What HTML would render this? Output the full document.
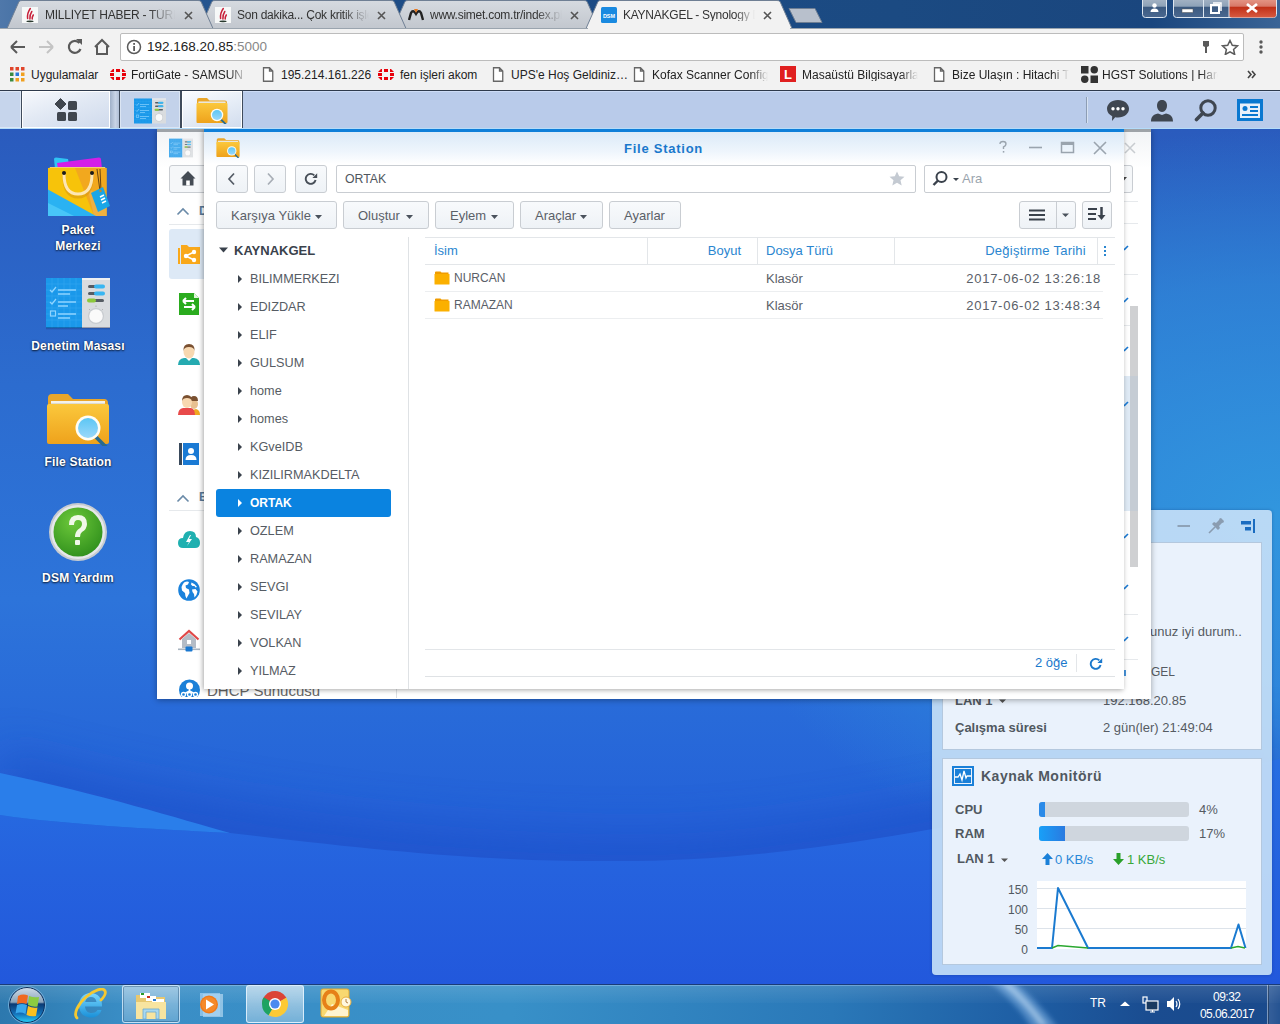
<!DOCTYPE html>
<html><head><meta charset="utf-8">
<style>
*{margin:0;padding:0;box-sizing:border-box}
html,body{width:1280px;height:1024px;overflow:hidden;font-family:"Liberation Sans",sans-serif;position:relative;background:#2a6ad0}
.a{position:absolute}
.t{position:absolute;white-space:nowrap;line-height:1}
#frame{left:0;top:0;width:1280px;height:29px;background:linear-gradient(90deg,#4f78aa 0%,#2a5a94 8%,#1d4c86 30%,#1b4a82 70%,#1a467e 90%,#3a6496 100%)}
#toolbar{left:0;top:28px;width:1280px;height:34px;background:#f2f2f2;border-top:1px solid #9aa4ae}
#bm{left:0;top:62px;width:1280px;height:28px;background:#f2f2f2}
#dsmbar{left:0;top:89px;width:1280px;height:40px;background:#bccfea;border-top:1px solid #4d5c70}
#wtb{left:0;top:980px;width:1280px;height:44px;background:linear-gradient(180deg,#3a86c6 0%,#2a70b0 50%,#2664a4 100%);border-top:1px solid #1a3a70}
.tabtxt{font-size:12px;color:#333;letter-spacing:-0.25px}
.bmt{font-size:12px;color:#222}
.dl{font-size:12px;font-weight:bold;letter-spacing:0.2px;color:#fff;text-shadow:0 1px 2px rgba(0,0,0,0.7),0 0 2px rgba(0,0,0,0.4)}
.btn{background:linear-gradient(180deg,#f8fafc,#eef2f6);border:1px solid #c9cdd2;border-radius:3px}
.bt{font-size:13px;color:#5a6068}
.ti{position:absolute;left:238px;white-space:nowrap;font-size:12.7px;color:#565c64;line-height:13px;padding-left:12px}
.ti i{position:absolute;left:0;top:1.5px;width:0;height:0;border-top:4px solid transparent;border-bottom:4px solid transparent;border-left:4px solid #3a424c}
.ti.sel{color:#fff;font-weight:bold;font-size:12px}
.ti{margin-top:1px}
.ti.sel i{border-left-color:#fff}
.hd{font-size:13px;color:#2a86d0}
.rw{font-size:13px;color:#5a6068}
.dt{letter-spacing:0.74px}
.wt{font-size:13px;color:#555b62}
.wb{font-size:13px;color:#505860;font-weight:bold}
.ax{font-size:12px;color:#505860}
</style></head><body>
<!-- desktop -->
<svg class="a" style="left:0;top:129px" width="1280" height="855" viewBox="0 0 1280 855">
<defs>
<linearGradient id="dg" x1="0" y1="0" x2="0" y2="1">
<stop offset="0" stop-color="#2a5bbd"/><stop offset="0.3" stop-color="#2c6ccf"/><stop offset="0.55" stop-color="#2d74da"/><stop offset="0.8" stop-color="#2462d8"/><stop offset="1" stop-color="#2258da"/>
</linearGradient>
<radialGradient id="dr" cx="1" cy="0.45" r="0.45">
<stop offset="0" stop-color="#3196de" stop-opacity="1"/><stop offset="0.6" stop-color="#3090dc" stop-opacity="0.6"/><stop offset="1" stop-color="#3090dc" stop-opacity="0"/>
</radialGradient>
<linearGradient id="lg" x1="0" y1="0" x2="0" y2="1"><stop offset="0" stop-color="#276ee2"/><stop offset="0.5" stop-color="#2562de"/><stop offset="1" stop-color="#2258dc"/></linearGradient>
</defs>
<rect width="1280" height="855" fill="url(#dg)"/>
<rect width="1280" height="855" fill="url(#dr)"/>
<defs><linearGradient id="dz" x1="0" y1="0" x2="0" y2="1"><stop offset="0" stop-color="#1e50c8" stop-opacity="0"/><stop offset="0.6" stop-color="#1e50c8" stop-opacity="0.35"/><stop offset="1" stop-color="#1e4ec8" stop-opacity="0.55"/></linearGradient></defs>
<filter id="bl" x="-0.2" y="-0.5" width="1.4" height="2"><feGaussianBlur stdDeviation="22"/></filter>
<path d="M0,620 C150,660 350,700 600,705 C760,710 900,680 1280,600 L1280,680 C900,760 760,780 600,780 C480,780 380,770 230,750 C180,740 100,720 0,700Z" fill="#1c4cc4" opacity="0.5" filter="url(#bl)"/>
<path d="M230,704 C380,722 480,732 600,732 C760,734 900,712 1280,630 L1280,855 L0,855 L0,686 C60,695 150,700 230,704Z" fill="url(#lg)"/>
<path d="M0,644 C100,665 180,690 230,704 C150,700 60,695 0,686Z" fill="#2a7eea"/>
</svg>
<div id="frame" class="a"></div>
<!-- tabs -->
<svg class="a" style="left:0;top:0" width="830" height="29">
<defs><linearGradient id="tg" x1="0" y1="0" x2="0" y2="1"><stop offset="0" stop-color="#d6dae0"/><stop offset="1" stop-color="#c2c7ce"/></linearGradient></defs>
<path d="M393,28.5 L405,1.5 Q406,0.5 408,0.5 L584,0.5 Q586,0.5 587,1.5 L599,28.5Z" fill="url(#tg)" stroke="#6f7f94" stroke-width="1"/>
<path d="M200,28.5 L212,1.5 Q213,0.5 215,0.5 L391,0.5 Q393,0.5 394,1.5 L406,28.5Z" fill="url(#tg)" stroke="#6f7f94" stroke-width="1"/>
<path d="M7,28.5 L19,1.5 Q20,0.5 22,0.5 L198,0.5 Q200,0.5 201,1.5 L213,28.5Z" fill="url(#tg)" stroke="#6f7f94" stroke-width="1"/>
<path d="M586,28.5 L598,1.5 Q599,0.5 601,0.5 L777,0.5 Q779,0.5 780,1.5 L792,28.5Z" fill="#f2f2f2" stroke="#6f7f94" stroke-width="1"/>
<path d="M789,8.5 L815,8.5 L822,22.5 L796,22.5Z" fill="#b8c0cc" stroke="#6f7f94" stroke-width="1"/>
</svg>
<!-- tab content -->
<svg class="a" style="left:22px;top:7px" width="16" height="16" viewBox="0 0 16 16"><rect width="16" height="16" fill="#f6f8f8"/><path d="M8.3,1.5 Q5,6 5.6,11.5 M9.8,4.5 Q7.5,8 7.9,12 M11.3,8 Q10,10 10.2,12" stroke="#c8203a" stroke-width="1.5" fill="none" stroke-linecap="round"/><ellipse cx="8" cy="14.3" rx="3.6" ry="0.9" fill="#2a3a30"/></svg>
<div class="t tabtxt" style="left:45px;top:9px;width:130px;overflow:hidden;-webkit-mask-image:linear-gradient(90deg,#000 80%,transparent)">MİLLİYET HABER - TÜRKİYE</div>
<svg class="a" style="left:184px;top:11px" width="9" height="9"><path d="M1,1L8,8M8,1L1,8" stroke="#555" stroke-width="1.6"/></svg>
<svg class="a" style="left:215px;top:7px" width="16" height="16" viewBox="0 0 16 16"><rect width="16" height="16" fill="#f6f8f8"/><path d="M8.3,1.5 Q5,6 5.6,11.5 M9.8,4.5 Q7.5,8 7.9,12 M11.3,8 Q10,10 10.2,12" stroke="#c8203a" stroke-width="1.5" fill="none" stroke-linecap="round"/><ellipse cx="8" cy="14.3" rx="3.6" ry="0.9" fill="#2a3a30"/></svg>
<div class="t tabtxt" style="left:237px;top:9px;width:132px;overflow:hidden;-webkit-mask-image:linear-gradient(90deg,#000 80%,transparent)">Son dakika... Çok kritik işlem</div>
<svg class="a" style="left:377px;top:11px" width="9" height="9"><path d="M1,1L8,8M8,1L1,8" stroke="#555" stroke-width="1.6"/></svg>
<svg class="a" style="left:408px;top:7px" width="16" height="16" viewBox="0 0 16 16"><path d="M1,13 L3,6 Q5,2 8,7 Q11,2 13,6 L15,13" stroke="#222" stroke-width="2.4" fill="none"/><path d="M6,2 L10,2 L8,6Z" fill="#e87820"/></svg>
<div class="t tabtxt" style="left:430px;top:9px;width:132px;overflow:hidden;-webkit-mask-image:linear-gradient(90deg,#000 80%,transparent)">www.simet.com.tr/index.php</div>
<svg class="a" style="left:570px;top:11px" width="9" height="9"><path d="M1,1L8,8M8,1L1,8" stroke="#555" stroke-width="1.6"/></svg>
<svg class="a" style="left:601px;top:7px" width="16" height="16" viewBox="0 0 16 16"><rect width="16" height="16" rx="1.5" fill="#1a8ae0"/><text x="8" y="10.5" font-size="5.5" font-family="Liberation Sans" font-weight="bold" fill="#fff" text-anchor="middle">DSM</text></svg>
<div class="t tabtxt" style="left:623px;top:9px;width:132px;overflow:hidden;-webkit-mask-image:linear-gradient(90deg,#000 85%,transparent)">KAYNAKGEL - Synology DiskStation</div>
<svg class="a" style="left:763px;top:11px" width="9" height="9"><path d="M1,1L8,8M8,1L1,8" stroke="#555" stroke-width="1.6"/></svg>
<!-- window controls -->
<svg class="a" style="left:1140px;top:0" width="140" height="20">
<defs>
<linearGradient id="wb" x1="0" y1="0" x2="0" y2="1"><stop offset="0" stop-color="#aab8c8"/><stop offset="0.45" stop-color="#8ea2b8"/><stop offset="0.5" stop-color="#3c5a80"/><stop offset="1" stop-color="#4a6890"/></linearGradient>
<linearGradient id="wc" x1="0" y1="0" x2="0" y2="1"><stop offset="0" stop-color="#e8a090"/><stop offset="0.45" stop-color="#d87868"/><stop offset="0.5" stop-color="#c03018"/><stop offset="1" stop-color="#d85a40"/></linearGradient>
</defs>
<rect x="2.5" y="-3" width="24" height="20.5" rx="3" fill="url(#wb)" stroke="#dde6f0" stroke-width="1"/>
<rect x="33.5" y="-3" width="103" height="20.5" rx="3" fill="url(#wb)" stroke="#dde6f0" stroke-width="1"/>
<rect x="89" y="-3" width="47" height="20.5" rx="3" fill="url(#wc)"/>
<line x1="63.5" y1="0" x2="63.5" y2="17" stroke="#dde6f0"/>
<line x1="89" y1="0" x2="89" y2="17" stroke="#dde6f0"/>
<circle cx="14.5" cy="5.5" r="2.2" fill="#fff"/><path d="M10.5,12 Q10.5,8.5 14.5,8.5 Q18.5,8.5 18.5,12Z" fill="#fff"/>
<rect x="42" y="9" width="11" height="3.5" fill="#fff" stroke="#555" stroke-width="0.5"/>
<rect x="71" y="5" width="8" height="8" fill="none" stroke="#fff" stroke-width="2"/><path d="M73,3 L81,3 L81,11" fill="none" stroke="#fff" stroke-width="1.5"/>
<path d="M107,4 L117,12 M117,4 L107,12" stroke="#fff" stroke-width="2.8"/>
</svg>
<div id="toolbar" class="a"></div>
<div class="a" style="left:588px;top:28px;width:202px;height:2px;background:#f2f2f2"></div>
<svg class="a" style="left:0;top:28px" width="120" height="34">
<path d="M11,19 L25,19 M11,19 L17,13 M11,19 L17,25" stroke="#5a5a5a" stroke-width="2" fill="none"/>
<path d="M53,19 L39,19 M53,19 L47,13 M53,19 L47,25" stroke="#c4c4c4" stroke-width="2" fill="none"/>
<path d="M79.5,15 A6,6 0 1 0 80.5,21" stroke="#5a5a5a" stroke-width="2.2" fill="none"/><path d="M76,11 L82,11 L82,17Z" fill="#5a5a5a"/>
<path d="M95,19 L102,12 L109,19 M97,18 L97,26 L107,26 L107,18" stroke="#5a5a5a" stroke-width="2" fill="none"/>
</svg>
<div class="a" style="left:120px;top:33px;width:1124px;height:28px;background:#fff;border:1px solid #bcbcbc;border-radius:2px"></div>
<svg class="a" style="left:126px;top:39px" width="16" height="16"><circle cx="8" cy="8" r="6.5" fill="none" stroke="#5a5a5a" stroke-width="1.5"/><rect x="7.2" y="7" width="1.8" height="5" fill="#5a5a5a"/><rect x="7.2" y="4" width="1.8" height="1.8" fill="#5a5a5a"/></svg>
<div class="t" style="left:147px;top:40px;font-size:13.5px;color:#222">192.168.20.85<span style="color:#888">:5000</span></div>
<svg class="a" style="left:1198px;top:39px" width="60" height="16">
<path d="M5,2 L11,2 L11,7 L9,8 L9,14 L7,14 L7,8 L5,7Z" fill="#5a5a5a"/>
<path d="M32,1.5 L34.3,6.3 L39.5,6.9 L35.6,10.4 L36.7,15.5 L32,12.9 L27.3,15.5 L28.4,10.4 L24.5,6.9 L29.7,6.3Z" fill="none" stroke="#5a5a5a" stroke-width="1.5"/>
</svg>
<svg class="a" style="left:1258px;top:39px" width="6" height="18"><circle cx="3" cy="3" r="1.7" fill="#5a5a5a"/><circle cx="3" cy="8" r="1.7" fill="#5a5a5a"/><circle cx="3" cy="13" r="1.7" fill="#5a5a5a"/></svg>
<div id="bm" class="a"></div>
<svg class="a" style="left:10px;top:67px" width="15" height="15">
<rect x="0" y="0" width="3.5" height="3.5" fill="#e0452b"/><rect x="5.5" y="0" width="3.5" height="3.5" fill="#e0452b"/><rect x="11" y="0" width="3.5" height="3.5" fill="#e0452b"/>
<rect x="0" y="5.5" width="3.5" height="3.5" fill="#3a8a40"/><rect x="5.5" y="5.5" width="3.5" height="3.5" fill="#2a78d8"/><rect x="11" y="5.5" width="3.5" height="3.5" fill="#f0a020"/>
<rect x="0" y="11" width="3.5" height="3.5" fill="#3a8a40"/><rect x="5.5" y="11" width="3.5" height="3.5" fill="#f0a020"/><rect x="11" y="11" width="3.5" height="3.5" fill="#f0a020"/>
</svg>
<div class="t bmt" style="left:31px;top:69px">Uygulamalar</div>
<svg class="a" style="left:110px;top:67px" width="16" height="15"><g fill="#e8000a"><path d="M0,5 L3,2 L4,2 L4,5Z"/><rect x="6" y="2" width="4" height="3"/><path d="M12,2 L13,2 L16,5 L12,5Z"/><rect x="0" y="6" width="4" height="3"/><rect x="12" y="6" width="4" height="3"/><path d="M0,10 L4,10 L4,13 L3,13Z"/><rect x="6" y="10" width="4" height="3"/><path d="M12,10 L16,10 L13,13 L12,13Z"/></g></svg>
<div class="t bmt" style="left:131px;top:69px;width:116px;overflow:hidden;-webkit-mask-image:linear-gradient(90deg,#000 85%,transparent)">FortiGate - SAMSUN_BIM</div>
<svg class="a" style="left:262px;top:67px" width="12" height="15"><path d="M1.5,0.75 L7.5,0.75 L10.75,4 L10.75,14.25 L1.5,14.25Z M7.5,0.75 L7.5,4 L10.75,4" fill="#fff" stroke="#666" stroke-width="1.3"/></svg>
<div class="t bmt" style="left:281px;top:69px">195.214.161.226</div>
<svg class="a" style="left:378px;top:67px" width="16" height="15"><g fill="#e8000a"><path d="M0,5 L3,2 L4,2 L4,5Z"/><rect x="6" y="2" width="4" height="3"/><path d="M12,2 L13,2 L16,5 L12,5Z"/><rect x="0" y="6" width="4" height="3"/><rect x="12" y="6" width="4" height="3"/><path d="M0,10 L4,10 L4,13 L3,13Z"/><rect x="6" y="10" width="4" height="3"/><path d="M12,10 L16,10 L13,13 L12,13Z"/></g></svg>
<div class="t bmt" style="left:400px;top:69px">fen işleri akom</div>
<svg class="a" style="left:492px;top:67px" width="12" height="15"><path d="M1.5,0.75 L7.5,0.75 L10.75,4 L10.75,14.25 L1.5,14.25Z M7.5,0.75 L7.5,4 L10.75,4" fill="#fff" stroke="#666" stroke-width="1.3"/></svg>
<div class="t bmt" style="left:511px;top:69px">UPS'e Hoş Geldiniz…</div>
<svg class="a" style="left:633px;top:67px" width="12" height="15"><path d="M1.5,0.75 L7.5,0.75 L10.75,4 L10.75,14.25 L1.5,14.25Z M7.5,0.75 L7.5,4 L10.75,4" fill="#fff" stroke="#666" stroke-width="1.3"/></svg>
<div class="t bmt" style="left:652px;top:69px;width:116px;overflow:hidden;-webkit-mask-image:linear-gradient(90deg,#000 85%,transparent)">Kofax Scanner Configuration</div>
<div class="a" style="left:780px;top:66px;width:16px;height:16px;background:#e02020"><div class="t" style="left:4px;top:2px;font-size:13px;font-weight:bold;color:#fff">L</div></div>
<div class="t bmt" style="left:802px;top:69px;width:116px;overflow:hidden;-webkit-mask-image:linear-gradient(90deg,#000 85%,transparent)">Masaüstü Bilgisayarlar</div>
<svg class="a" style="left:933px;top:67px" width="12" height="15"><path d="M1.5,0.75 L7.5,0.75 L10.75,4 L10.75,14.25 L1.5,14.25Z M7.5,0.75 L7.5,4 L10.75,4" fill="#fff" stroke="#666" stroke-width="1.3"/></svg>
<div class="t bmt" style="left:952px;top:69px;width:117px;overflow:hidden;-webkit-mask-image:linear-gradient(90deg,#000 85%,transparent)">Bize Ulaşın : Hitachi Türkiye</div>
<svg class="a" style="left:1081px;top:66px" width="17" height="17"><rect x="0" y="0" width="7.5" height="7.5" fill="#333"/><rect x="9.5" y="0" width="7.5" height="7.5" rx="3.7" fill="#333"/><rect x="0" y="9.5" width="7.5" height="7.5" rx="3.7" fill="#333"/><rect x="9.5" y="9.5" width="7.5" height="7.5" fill="#333"/></svg>
<div class="t bmt" style="left:1102px;top:69px;width:116px;overflow:hidden;-webkit-mask-image:linear-gradient(90deg,#000 85%,transparent)">HGST Solutions | Hard Drives</div>
<svg class="a" style="left:1247px;top:70px" width="10" height="9"><path d="M1,1 L4,4.5 L1,8 M5,1 L8,4.5 L5,8" stroke="#444" stroke-width="1.6" fill="none"/></svg>
<!-- DSM taskbar -->
<div class="a" style="left:0;top:90px;width:1280px;height:39px;background:#b9cbea;border-top:1px solid #2e3a4c"></div>
<div class="a" style="left:0;top:91px;width:1280px;height:1px;background:#cddcf6"></div>
<div class="a" style="left:0;top:128px;width:1280px;height:1px;background:#b4dcfa"></div>
<div class="a" style="left:0;top:91px;width:21px;height:37px;background:#c6d5ec;border:1px solid #dce6f4;border-left:none"></div>
<div class="a" style="left:21px;top:91px;width:1px;height:37px;background:#3f4b5c"></div>
<div class="a" style="left:22px;top:91px;width:88px;height:37px;background:linear-gradient(160deg,#f6f8fc 0%,#e2e9f4 45%,#cfdaec 100%);border:1px solid #fff"></div>
<div class="a" style="left:110px;top:91px;width:9px;height:37px;background:linear-gradient(90deg,#9fb0c8,#c8d4e6 60%,#b0bfd6)"></div>
<div class="a" style="left:119px;top:91px;width:1px;height:37px;background:#3f4b5c"></div>
<div class="a" style="left:120px;top:91px;width:60px;height:37px;background:#c3d2ea;border:1px solid #dbe5f3"></div>
<div class="a" style="left:180px;top:91px;width:2px;height:37px;background:#3f4b5c"></div>
<div class="a" style="left:182px;top:91px;width:60px;height:37px;background:linear-gradient(160deg,#fafcff 0%,#e6edf7 50%,#d2ddee 100%);border:1px solid #fff"></div>
<div class="a" style="left:242px;top:91px;width:1px;height:37px;background:#3f4b5c"></div>
<svg class="a" style="left:134px;top:98px" width="32" height="26"><use href="#cp"/></svg>
<svg class="a" style="left:196px;top:97px" width="32" height="27"><use href="#fs"/></svg>
<svg class="a" style="left:54px;top:98px" width="24" height="24">
<path d="M6.5,0.5 L12,6 L6.5,11.5 L1,6Z" fill="#40464e" stroke="#40464e" stroke-width="1" stroke-linejoin="round"/>
<rect x="14" y="3" width="9" height="9" rx="1.5" fill="#40464e"/>
<rect x="3" y="14" width="9" height="9" rx="1.5" fill="#40464e"/>
<rect x="14" y="14" width="9" height="9" rx="1.5" fill="#40464e"/>
</svg>
<div class="a" style="left:1086px;top:97px;width:1px;height:26px;background:#8d9db4"></div>
<div class="a" style="left:1087px;top:97px;width:1px;height:26px;background:#d6e2f2"></div>
<svg class="a" style="left:1106px;top:99px" width="24" height="23" viewBox="0 0 24 23"><path d="M12,1 C18.5,1 23,5 23,9.8 C23,14.6 18.5,18.5 12,18.5 C11,18.5 10,18.4 9.2,18.2 L6,22 L6.2,17.2 C3,15.8 1,13 1,9.8 C1,5 5.5,1 12,1Z" fill="#3f4650"/><circle cx="7" cy="9.8" r="1.7" fill="#fff"/><circle cx="12" cy="9.8" r="1.7" fill="#fff"/><circle cx="17" cy="9.8" r="1.7" fill="#fff"/></svg>
<svg class="a" style="left:1150px;top:99px" width="24" height="23" viewBox="0 0 24 23"><path d="M12,1 C15.5,1 17,3.5 17,6.5 C17,10 15,13 12,13 C9,13 7,10 7,6.5 C7,3.5 8.5,1 12,1Z" fill="#3f4650"/><path d="M1,22.5 C1,18 3,15.5 8,14.5 L12,16 L16,14.5 C21,15.5 23,18 23,22.5Z" fill="#3f4650"/></svg>
<svg class="a" style="left:1194px;top:99px" width="24" height="23" viewBox="0 0 24 23"><circle cx="14" cy="9" r="7.2" fill="none" stroke="#3f4650" stroke-width="3"/><path d="M9,14 L2.5,20.5" stroke="#3f4650" stroke-width="3.6" stroke-linecap="round"/></svg>
<svg class="a" style="left:1237px;top:99px" width="26" height="23" viewBox="0 0 26 23"><rect x="1.5" y="1.5" width="23" height="19" fill="#e8f0fa" stroke="#0a78d0" stroke-width="3"/><rect x="1.5" y="1.5" width="23" height="3" fill="#0a78d0"/><circle cx="8" cy="9.5" r="2.5" fill="#0a78d0"/><rect x="13" y="7" width="8" height="2" fill="#0a78d0"/><rect x="13" y="11" width="8" height="2" fill="#0a78d0"/><rect x="5" y="15" width="16" height="2" fill="#0a78d0"/></svg>
<!-- symbols -->
<svg width="0" height="0" style="position:absolute">
<defs>
<symbol id="cp" viewBox="0 0 64 50">
<rect x="0" y="0" width="36" height="50" fill="#1a98ea"/>
<g stroke="#3aa8f0" stroke-width="0.5"><path d="M0,6H36M0,12H36M0,18H36M0,24H36M0,30H36M0,36H36M0,42H36M6,0V50M12,0V50M18,0V50M24,0V50M30,0V50"/></g>
<rect x="36" y="0" width="28" height="50" fill="#d9dcdf"/>
<rect x="36" y="0" width="28" height="2" fill="#eef0f2"/>
<path d="M4,12 L6,14 L10,9" stroke="#8fd4ff" stroke-width="1.3" fill="none"/>
<path d="M4,24 L6,26 L10,21" stroke="#8fd4ff" stroke-width="1.3" fill="none"/>
<rect x="4.5" y="33" width="5" height="5" stroke="#8fd4ff" stroke-width="1.2" fill="none"/>
<path d="M12,12H30M12,16H24M12,24H30M12,28H22M12,36H30M12,40H24" stroke="#8fd4ff" stroke-width="1.3"/>
<rect x="42" y="7" width="16" height="3" rx="1.5" fill="#555c63"/><rect x="48" y="6.5" width="11" height="4" rx="2" fill="#38b6f2"/>
<rect x="42" y="14" width="16" height="3" rx="1.5" fill="#555c63"/><rect x="48" y="13.5" width="11" height="4" rx="2" fill="#38b6f2"/>
<rect x="42" y="21" width="16" height="3" rx="1.5" fill="#555c63"/><rect x="41" y="20.5" width="9" height="4" rx="2" fill="#8cc83c"/>
<circle cx="50" cy="38" r="8" fill="#c8ccd0"/><circle cx="50" cy="38" r="6.8" fill="#fafafa"/>
<path d="M50,27.5V29M43,31L44,32M57,31L56,32" stroke="#aaa" stroke-width="0.8"/>
</symbol>
<symbol id="fs" viewBox="0 0 64 54">
<path d="M2,6 Q2,2 6,2 L22,2 L27,7 L58,7 Q62,7 62,11 L62,18 L2,18Z" fill="#e9a62a"/>
<rect x="5" y="9" width="54" height="6" fill="#f4f2ea"/>
<rect x="5" y="11" width="54" height="3" fill="#dedbd0"/>
<path d="M1,14 Q1,12 3,12 L61,12 Q63,12 63,14 L63,50 Q63,52 61,52 L3,52 Q1,52 1,50Z" fill="url(#fsg)"/>
<line x1="48" y1="43" x2="61" y2="56" stroke="#2a6a8c" stroke-width="3.6" stroke-linecap="round"/>
<circle cx="42" cy="36" r="12.5" fill="#fffdf4"/>
<circle cx="42" cy="36" r="10" fill="url(#lens)"/>
</symbol>
<linearGradient id="lens" x1="0" y1="0" x2="0" y2="1"><stop offset="0" stop-color="#5cc6f4"/><stop offset="1" stop-color="#9ad8fa"/></linearGradient>
<linearGradient id="fsg" x1="0" y1="0" x2="0" y2="1"><stop offset="0" stop-color="#fbc83c"/><stop offset="1" stop-color="#eea21c"/></linearGradient>
<symbol id="fold" viewBox="0 0 16 14">
<path d="M1,1.2 Q1,0.5 2,0.5 L6.5,0.5 L7.5,1.5 L14.5,1.5 L14.5,3 L1,3Z" fill="#f09c00"/>
<path d="M0.5,3 L15.5,3 L15.5,13 Q15.5,13.5 15,13.5 L1,13.5 Q0.5,13.5 0.5,13Z" fill="#fbb000"/>
</symbol>
</defs>
</svg>
<!-- desktop icons -->
<svg class="a" style="left:47px;top:156px" width="64" height="62" viewBox="0 0 64 62">
<path d="M7,3 Q7,1.5 9,1.5 L21,3 L23,13 L8,13Z" fill="#30c4f4"/>
<path d="M10,7 L52,1.5 Q54,1.5 54,3.5 L55,13 L11,13Z" fill="#d41ee8"/>
<path d="M3,11 L58,11 L59,13 L2,13Z" fill="#f0d070"/>
<rect x="1" y="12" width="58.5" height="48" fill="#f7c30a"/>
<path d="M28,12 L59.5,12 L59.5,60 L47,60 Z" fill="#f2a81e"/>
<path d="M40,30 L59.5,50 L59.5,60 L47,60Z" fill="#f0b040"/>
<path d="M1,33.5 L49,60 L1,60Z" fill="#2ab2f2"/>
<path d="M1,47 L27,60 L1,60Z" fill="#48c6f8"/>
<path d="M17,18 Q17,39 31,39 Q45,39 45,18" stroke="#d89a10" stroke-width="3" fill="none" transform="translate(0,2)" opacity="0.6"/>
<path d="M17,18 Q17,38 31,38 Q45,38 45,18" stroke="#fde6b4" stroke-width="3" fill="none"/>
<circle cx="17" cy="17" r="2" fill="#1a1a1a"/><circle cx="45" cy="17" r="2" fill="#1a1a1a"/>
<path d="M50,13 L53,35 M53,13 L54,35" stroke="#5a3a10" stroke-width="0.9"/>
<path d="M44,37 L56,31 L63,50 L51,56Z" fill="#1aa6e6"/>
<circle cx="53.5" cy="35" r="1.2" fill="#c08a30"/>
<path d="M53,41 L57,39 M54,44 L58,42 M55,47 L59,45" stroke="#fff" stroke-width="1.6"/>
</svg>
<div class="t dl" style="left:0;width:156px;top:224px;text-align:center">Paket</div>
<div class="t dl" style="left:0;width:156px;top:240px;text-align:center">Merkezi</div>
<svg class="a" style="left:46px;top:278px" width="64" height="50"><use href="#cp"/></svg>
<div class="a" style="left:46px;top:327px;width:64px;height:3px;background:linear-gradient(180deg,rgba(0,0,40,0.35),transparent)"></div>
<div class="t dl" style="left:0;width:156px;top:340px;text-align:center">Denetim Masası</div>
<svg class="a" style="left:46px;top:392px" width="64" height="54"><use href="#fs"/></svg>
<div class="t dl" style="left:0;width:156px;top:456px;text-align:center">File Station</div>
<svg class="a" style="left:48px;top:502px" width="60" height="60" viewBox="0 0 60 60">
<circle cx="30" cy="30" r="29" fill="#c8ccd0"/>
<circle cx="30" cy="30" r="27" fill="#e6e8ea"/>
<circle cx="30" cy="30" r="24.5" fill="url(#hg)"/>
<defs><radialGradient id="hg" cx="0.4" cy="0.3" r="0.8"><stop offset="0" stop-color="#6cc83a"/><stop offset="1" stop-color="#2c8c1a"/></radialGradient></defs>
<path d="M21,23 Q21,13 30,13 Q39,13 39,22 Q39,27 34,30 Q32,31.5 32,35 L27,35 Q27,30 30,27.5 Q34,25 34,22 Q34,18 30,18 Q26,18 26,23Z" fill="#f0f8e8"/>
<rect x="27" y="38" width="5" height="5" rx="1" fill="#f0f8e8"/>
</svg>
<div class="t dl" style="left:0;width:156px;top:572px;text-align:center">DSM Yardım</div>
<!-- widget panel -->
<div class="a" style="left:932px;top:510px;width:340px;height:465px;background:rgba(196,222,246,0.92);border-radius:0 4px 4px 4px;box-shadow:0 0 3px rgba(0,20,80,0.3)"></div>
<svg class="a" style="left:1176px;top:518px" width="82" height="16">
<path d="M1.5,8 L14,8" stroke="#8a9cb0" stroke-width="1.8"/>
<path d="M33,15 L39,9" stroke="#8a9cb0" stroke-width="1.6"/><path d="M36,6 L42,12 L44,10 L43,8 L46,5 Q48,5 48,3 L45,0 Q43,0 43,2 L40,5 L38,4Z" fill="#8a9cb0"/>
<rect x="65" y="3" width="10" height="3.5" fill="#1a6cc0"/><rect x="69" y="9" width="6" height="3.5" fill="#1a6cc0"/><rect x="77" y="1" width="2" height="14" fill="#1a6cc0"/>
</svg>
<div class="a" style="left:942px;top:542px;width:320px;height:208px;background:#eaf2fc;border:1px solid #b4c8de"></div>
<div class="t wt" style="left:1150px;top:625px">unuz iyi durum..</div>
<div class="t wt" style="left:1151px;top:666px;font-size:12px">GEL</div>
<div class="t wb" style="left:955px;top:694px">LAN 1</div><svg class="a" style="left:999px;top:699px" width="8" height="5"><path d="M0,0.5 L7,0.5 L3.5,4Z" fill="#555"/></svg>
<div class="t wt" style="left:1103px;top:694px">192.168.20.85</div>
<div class="t wb" style="left:955px;top:721px">Çalışma süresi</div>
<div class="t wt" style="left:1103px;top:721px">2 gün(ler) 21:49:04</div>
<div class="a" style="left:942px;top:758px;width:320px;height:207px;background:#eaf2fc;border:1px solid #b4c8de"></div>
<svg class="a" style="left:952px;top:766px" width="22" height="20"><rect x="1" y="1" width="20" height="18" fill="none" stroke="#1a80d8" stroke-width="2"/><rect x="3" y="3" width="16" height="14" fill="#1a80d8"/><path d="M3,11 L6,11 L8,8 L10,14 L12,5 L14,12 L15,10 L19,10" stroke="#fff" stroke-width="1.3" fill="none"/></svg>
<div class="t" style="left:981px;top:769px;font-size:14px;font-weight:bold;color:#505860;letter-spacing:0.5px">Kaynak Monitörü</div>
<div class="t wb" style="left:955px;top:803px">CPU</div>
<div class="a" style="left:1039px;top:802px;width:150px;height:15px;background:#cfd6de;border-radius:3px;overflow:hidden"><div class="a" style="left:0;top:0;width:6px;height:15px;background:#2a8ae8"></div></div>
<div class="t wt" style="left:1199px;top:803px">4%</div>
<div class="t wb" style="left:955px;top:827px">RAM</div>
<div class="a" style="left:1039px;top:826px;width:150px;height:15px;background:#cfd6de;border-radius:3px;overflow:hidden"><div class="a" style="left:0;top:0;width:26px;height:15px;background:linear-gradient(90deg,#18a0f8,#2a7ae0)"></div></div>
<div class="t wt" style="left:1199px;top:827px">17%</div>
<div class="t wb" style="left:957px;top:852px">LAN 1</div><svg class="a" style="left:1001px;top:858px" width="8" height="5"><path d="M0,0.5 L7,0.5 L3.5,4Z" fill="#555"/></svg>
<svg class="a" style="left:1042px;top:853px" width="11" height="12"><path d="M5.5,0 L11,6 L7.5,6 L7.5,12 L3.5,12 L3.5,6 L0,6Z" fill="#1a80d8"/></svg>
<div class="t" style="left:1055px;top:853px;font-size:13px;color:#2a88d8">0 KB/s</div>
<svg class="a" style="left:1113px;top:853px" width="11" height="12"><path d="M5.5,12 L11,6 L7.5,6 L7.5,0 L3.5,0 L3.5,6 L0,6Z" fill="#2aa02a"/></svg>
<div class="t" style="left:1127px;top:853px;font-size:13px;color:#38a838">1 KB/s</div>
<div class="a" style="left:1037px;top:881px;width:209px;height:68px;background:#fff"></div>
<svg class="a" style="left:1037px;top:881px" width="210" height="70">
<path d="M0,7.5H209M0,27.5H209M0,47.5H209" stroke="#dde3ea" stroke-width="1"/>
<path d="M0,67 L15,67 L21,7 L51,67 L194,67 L201.5,43.5 L208.5,67" stroke="#1a7ad0" stroke-width="2" fill="none" stroke-linejoin="round"/>
<path d="M15,67 L21,64.5 L51,67 M194,67 L201,65.5 L208,67" stroke="#2aa830" stroke-width="1.6" fill="none"/>
</svg>
<div class="t ax" style="left:1000px;width:28px;text-align:right;top:884px">150</div>
<div class="t ax" style="left:1000px;width:28px;text-align:right;top:904px">100</div>
<div class="t ax" style="left:1000px;width:28px;text-align:right;top:924px">50</div>
<div class="t ax" style="left:1000px;width:28px;text-align:right;top:944px">0</div>
<!-- Denetim Masasi window (behind) -->
<div class="a" style="left:157px;top:129px;width:994px;height:570px;background:#fff;box-shadow:0 1px 6px rgba(0,0,0,0.35);clip-path:inset(0 -20px -20px -20px);border-top:3px solid #9ea3a8"></div>
<div class="a" style="left:157px;top:132px;width:994px;height:36px;background:linear-gradient(180deg,#f2f4f6,#fff)"></div>
<svg class="a" style="left:169px;top:138px;opacity:0.8" width="24" height="20"><use href="#cp"/></svg>
<div class="a" style="left:169px;top:165px;width:60px;height:28px;background:#f5f7f9;border:1px solid #c9cdd2;border-radius:3px"></div>
<svg class="a" style="left:180px;top:170px" width="16" height="17"><path d="M8,1 L15.5,8.5 L13.5,8.5 L13.5,15.5 L2.5,15.5 L2.5,8.5 L0.5,8.5Z" fill="#444b54"/><rect x="6.2" y="10.5" width="3.6" height="5" fill="#fff"/></svg>
<svg class="a" style="left:176px;top:207px" width="14" height="9"><path d="M1.5,7.5 L7,2 L12.5,7.5" stroke="#6a8aa8" stroke-width="1.6" fill="none"/></svg>
<div class="t" style="left:199px;top:205px;font-size:12px;font-weight:bold;color:#5a7a98">D</div>
<div class="a" style="left:169px;top:224px;width:35px;height:1px;background:#e6e9ec"></div>
<div class="a" style="left:169px;top:229px;width:40px;height:50px;background:#dde9f6;border-radius:3px"></div>
<svg class="a" style="left:177px;top:243px" width="24" height="22" viewBox="0 0 24 22"><path d="M4,2 L10,2 L12,4 L23,4 L23,21 L4,21Z" fill="#f9a81a"/><path d="M1,5 L3,5 L3,21 L1,21Z" fill="#f9a81a"/><circle cx="9" cy="13" r="2.2" fill="#fff"/><circle cx="17" cy="9" r="2.2" fill="#fff"/><circle cx="17" cy="17" r="2.2" fill="#fff"/><path d="M9,13 L17,9 M9,13 L17,17" stroke="#fff" stroke-width="1.4"/></svg>
<svg class="a" style="left:179px;top:293px" width="20" height="22" viewBox="0 0 20 22"><path d="M0,0 L15,0 L20,5 L20,22 L0,22Z" fill="#2aab1e"/><path d="M15,0 L15,5 L20,5Z" fill="#dff5da"/><path d="M4,8 L15,8 M4,8 L7,5 M4,8 L7,11 M16,14 L5,14 M16,14 L13,11 M16,14 L13,17" stroke="#fff" stroke-width="2" fill="none"/></svg>
<svg class="a" style="left:178px;top:342px" width="22" height="23" viewBox="0 0 22 23"><path d="M0,23 Q0,17 6,16 L16,16 Q22,17 22,23Z" fill="#25aab0"/><path d="M7,15 L11,19 L15,15Z" fill="#fff"/><ellipse cx="11" cy="10" rx="5.5" ry="6.5" fill="#f8d8b0"/><path d="M5.5,9 Q5,2 11,2 Q17,2 16.5,9 Q16,5 11,5 Q6,5 5.5,9Z" fill="#7a5030"/></svg>
<svg class="a" style="left:178px;top:393px" width="22" height="22" viewBox="0 0 22 22"><ellipse cx="16" cy="11" rx="4" ry="5" fill="#e8c090"/><path d="M12,8 Q12,3 16,3 Q20,3 20,8Z" fill="#7a5030"/><path d="M14,22 Q14,16 18,16 Q22,17 22,22Z" fill="#f0a820"/><path d="M0,22 Q0,16 5,15 L13,15 Q17,16 17,22Z" fill="#e84a4a"/><ellipse cx="9" cy="9" rx="5" ry="6" fill="#f8d8b0"/><path d="M4,8 Q4,2 9,2 Q14,2 14,8 Q13,5 9,5 Q5,5 4,8Z" fill="#7a5030"/></svg>
<svg class="a" style="left:179px;top:443px" width="20" height="22" viewBox="0 0 20 22"><rect x="0" y="0" width="3" height="22" fill="#3a4a5c"/><rect x="4" y="0" width="16" height="22" fill="#1a7ad4"/><circle cx="12" cy="8" r="3" fill="#fff"/><path d="M6.5,17 Q6.5,12 12,12 Q17.5,12 17.5,17Z" fill="#fff"/></svg>
<svg class="a" style="left:176px;top:494px" width="14" height="9"><path d="M1.5,7.5 L7,2 L12.5,7.5" stroke="#6a8aa8" stroke-width="1.6" fill="none"/></svg>
<div class="t" style="left:199px;top:491px;font-size:12px;font-weight:bold;color:#5a7a98">E</div>
<div class="a" style="left:169px;top:510px;width:35px;height:1px;background:#e6e9ec"></div>
<svg class="a" style="left:178px;top:530px" width="22" height="19" viewBox="0 0 22 19"><path d="M5,18 Q0,18 0,13 Q0,8 5,8 Q6,1 12,1 Q18,1 18,7 Q22,8 22,13 Q22,18 17,18Z" fill="#1fb0b0"/><path d="M12,5 L8,12 L11,12 L9,16 L14,9 L11,9 L13,5Z" fill="#fff"/></svg>
<svg class="a" style="left:178px;top:579px" width="22" height="22" viewBox="0 0 22 22"><circle cx="11" cy="11" r="10.8" fill="#1a82dc"/><path d="M6,3.5 Q9,2 11,3 L10,5.5 L7.5,6.5 L8,9 L11,10.5 L11.5,14 L9.5,17.5 L8.5,19.5 Q7,17 7,14 L4,11.5 L3.5,8 Q4.5,5 6,3.5Z" fill="#fff"/><path d="M13.5,3.5 Q17,4.5 19,8 L17.5,8.5 L16.5,7 L14.5,7 L13,5.5Z M14,10.5 L17.5,10 L19.5,12.5 Q19,16 16.5,18.5 L16,15 L14.5,13Z" fill="#fff"/></svg>
<svg class="a" style="left:178px;top:629px" width="22" height="24" viewBox="0 0 22 24"><path d="M1.5,10.5 L11,2 L20.5,10.5" stroke="#e04848" stroke-width="2.2" fill="none"/><path d="M4,10 L11,4 L18,10 L18,19 L4,19Z" fill="#b4bcc6"/><rect x="9" y="11" width="4" height="4" fill="#fff"/><rect x="0" y="19.5" width="22" height="1.6" fill="#a8b4c0"/><rect x="7.5" y="17.5" width="7" height="5" rx="1" fill="#1a78d0"/></svg>
<svg class="a" style="left:179px;top:679px" width="21" height="18" viewBox="0 0 21 18"><circle cx="10.5" cy="11" r="10.5" fill="#1a80d8"/><circle cx="10.5" cy="7" r="3.5" fill="#fff"/><path d="M10.5,10 L10.5,14 M10.5,12 L5,15 M10.5,12 L16,15" stroke="#fff" stroke-width="1.5"/><circle cx="4.5" cy="15.5" r="2" fill="#1a80d8" stroke="#fff" stroke-width="1.3"/><circle cx="10.5" cy="15.5" r="2" fill="#1a80d8" stroke="#fff" stroke-width="1.3"/><circle cx="16.5" cy="15.5" r="2" fill="#1a80d8" stroke="#fff" stroke-width="1.3"/></svg>
<div class="t" style="left:207px;top:683px;font-size:15px;color:#666">DHCP Sunucusu</div>
<div class="a" style="left:396px;top:688px;width:1px;height:10px;background:#dde0e3"></div>
<!-- right strip of denetim -->
<svg class="a" style="left:1124px;top:142px" width="12" height="12"><path d="M1,1 L11,11 M11,1 L1,11" stroke="#c8ccd0" stroke-width="1.5"/></svg>
<div class="a" style="left:1110px;top:165px;width:23px;height:28px;background:#f5f7f9;border:1px solid #c9cdd2;border-radius:3px"></div>
<svg class="a" style="left:1121px;top:177px" width="6" height="4"><path d="M0,0 L6,0 L3,3.5Z" fill="#444"/></svg>
<div class="a" style="left:1124px;top:201px;width:14px;height:1px;background:#e6e9ec"></div>
<div class="a" style="left:1124px;top:223px;width:14px;height:1px;background:#e6e9ec"></div>
<div class="a" style="left:1124px;top:274px;width:14px;height:1px;background:#e6e9ec"></div>
<div class="a" style="left:1124px;top:325px;width:14px;height:1px;background:#e6e9ec"></div>
<div class="a" style="left:1124px;top:376px;width:14px;height:135px;background:#dfeaf5"></div>
<div class="a" style="left:1124px;top:614px;width:14px;height:1px;background:#e6e9ec"></div>
<div class="a" style="left:1124px;top:659px;width:14px;height:1px;background:#e6e9ec"></div>
<div class="a" style="left:1130px;top:306px;width:8px;height:261px;background:#cfd0d2"></div>
<div class="a" style="left:1130px;top:376px;width:8px;height:135px;background:#c5ccd4"></div>
<svg class="a" style="left:1124px;top:240px" width="6" height="440"><g stroke="#1a7ad4" stroke-width="1.6"><path d="M0,10 L4,6"/><path d="M0,62 L4,58"/><path d="M0,111 L4,107"/><path d="M0,166 L4,162"/><path d="M0,298 L4,294"/><path d="M0,349 L4,345"/><path d="M0,401 L4,397"/><path d="M1,430 L1,436"/></g></svg>
<!-- File Station window -->
<div class="a" style="left:204px;top:129px;width:920px;height:560px;background:#fff;box-shadow:-1px 1px 5px rgba(0,0,0,0.35);clip-path:inset(0 -20px -20px -20px);border-top:3px solid #0f7fd9"></div>
<div class="a" style="left:204px;top:132px;width:920px;height:32px;background:linear-gradient(180deg,#dbeaf8 0%,#eef5fc 60%,#fff 100%)"></div>
<svg class="a" style="left:216px;top:137px" width="24" height="21"><use href="#fs"/></svg>
<div class="t" style="left:624px;top:142px;font-size:13px;font-weight:bold;color:#1a78cc;letter-spacing:0.75px">File Station</div>
<svg class="a" style="left:996px;top:140px" width="112" height="16">
<path d="M4,4 Q4,1.5 7,1.5 Q10,1.5 10,4 Q10,6 7.5,7 L7.5,9" stroke="#9aa4ae" stroke-width="1.4" fill="none"/><rect x="6.8" y="11" width="1.5" height="1.6" fill="#9aa4ae"/>
<path d="M33,7.5 L46,7.5" stroke="#9aa4ae" stroke-width="1.6"/>
<rect x="65.5" y="2.5" width="12" height="10" fill="none" stroke="#9aa4ae" stroke-width="1.5"/><rect x="65" y="2" width="13" height="3" fill="#9aa4ae"/>
<path d="M98,2 L110,14 M110,2 L98,14" stroke="#9aa4ae" stroke-width="1.6"/>
</svg>
<div class="a btn" style="left:216px;top:165px;width:32px;height:28px"></div>
<svg class="a" style="left:226px;top:172px" width="12" height="14"><path d="M8,1.5 L3,7 L8,12.5" stroke="#555c66" stroke-width="1.7" fill="none"/></svg>
<div class="a btn" style="left:254px;top:165px;width:32px;height:28px"></div>
<svg class="a" style="left:264px;top:172px" width="12" height="14"><path d="M4,1.5 L9,7 L4,12.5" stroke="#a8aeb6" stroke-width="1.7" fill="none"/></svg>
<div class="a btn" style="left:295px;top:165px;width:32px;height:28px"></div>
<svg class="a" style="left:304px;top:171px" width="14" height="14"><path d="M11.6,9.1 A5,5 0 1 1 10.3,4.3" stroke="#474e57" stroke-width="1.9" fill="none"/><path d="M13.2,2.2 L13.2,7 L8.4,7Z" fill="#474e57"/></svg>
<div class="a" style="left:336px;top:165px;width:580px;height:28px;background:#fff;border:1px solid #c9cdd2;border-radius:2px"></div>
<div class="t" style="left:345px;top:173px;font-size:12.3px;color:#50565e">ORTAK</div>
<svg class="a" style="left:889px;top:171px" width="16" height="15"><path d="M8,0.5 L10.2,5.3 L15.5,5.8 L11.5,9.3 L12.7,14.5 L8,11.8 L3.3,14.5 L4.5,9.3 L0.5,5.8 L5.8,5.3Z" fill="#c4cad2"/></svg>
<div class="a" style="left:924px;top:165px;width:187px;height:28px;background:#fff;border:1px solid #c9cdd2;border-radius:2px"></div>
<svg class="a" style="left:932px;top:170px" width="30" height="18"><circle cx="9.5" cy="7" r="5" fill="none" stroke="#3a424c" stroke-width="2"/><path d="M6,10.5 L1.5,15" stroke="#3a424c" stroke-width="2.4"/><path d="M21,8 L27,8 L24,11Z" fill="#3a424c"/></svg>
<div class="t" style="left:962px;top:172px;font-size:13px;color:#9aa4ae">Ara</div>
<!-- toolbar -->
<div class="a btn" style="left:216px;top:201px;width:121px;height:28px"></div>
<div class="t bt" style="left:231px;top:209px">Karşıya Yükle</div><svg class="a" style="left:315px;top:215px" width="7" height="4"><path d="M0,0 L7,0 L3.5,4Z" fill="#4a525c"/></svg>
<div class="a btn" style="left:343px;top:201px;width:86px;height:28px"></div>
<div class="t bt" style="left:358px;top:209px">Oluştur</div><svg class="a" style="left:406px;top:215px" width="7" height="4"><path d="M0,0 L7,0 L3.5,4Z" fill="#4a525c"/></svg>
<div class="a btn" style="left:435px;top:201px;width:79px;height:28px"></div>
<div class="t bt" style="left:450px;top:209px">Eylem</div><svg class="a" style="left:491px;top:215px" width="7" height="4"><path d="M0,0 L7,0 L3.5,4Z" fill="#4a525c"/></svg>
<div class="a btn" style="left:520px;top:201px;width:83px;height:28px"></div>
<div class="t bt" style="left:535px;top:209px">Araçlar</div><svg class="a" style="left:580px;top:215px" width="7" height="4"><path d="M0,0 L7,0 L3.5,4Z" fill="#4a525c"/></svg>
<div class="a btn" style="left:609px;top:201px;width:72px;height:28px"></div>
<div class="t bt" style="left:624px;top:209px">Ayarlar</div>
<div class="a btn" style="left:1019px;top:201px;width:57px;height:28px"></div>
<div class="a" style="left:1056px;top:202px;width:1px;height:26px;background:#c9cdd2"></div>
<svg class="a" style="left:1029px;top:208px" width="16" height="14"><path d="M0,2.5H16M0,7H16M0,11.5H16" stroke="#3a424c" stroke-width="2"/></svg>
<svg class="a" style="left:1062px;top:213px" width="8" height="5"><path d="M0,0.5 L7,0.5 L3.5,4Z" fill="#4a525c"/></svg>
<div class="a btn" style="left:1082px;top:201px;width:30px;height:28px"></div>
<svg class="a" style="left:1088px;top:206px" width="18" height="17"><path d="M0,3H9M0,8H8M0,13H8" stroke="#3a424c" stroke-width="2"/><path d="M13.5,1V10" stroke="#3a424c" stroke-width="2.5"/><path d="M9.5,9 L17.5,9 L13.5,14Z" fill="#3a424c"/></svg>
<!-- tree -->
<svg class="a" style="left:219px;top:247px" width="9" height="6"><path d="M0,0.5 L9,0.5 L4.5,5.5Z" fill="#3a424c"/></svg>
<div class="t" style="left:234px;top:244px;font-size:13px;font-weight:bold;color:#3a424c">KAYNAKGEL</div>
<div class="a" style="left:216px;top:489px;width:175px;height:28px;background:#0a83e0;border-radius:3px"></div>
<div class="tree">
<div class="ti" style="top:272px"><i></i>BILIMMERKEZI</div>
<div class="ti" style="top:300px"><i></i>EDIZDAR</div>
<div class="ti" style="top:328px"><i></i>ELIF</div>
<div class="ti" style="top:356px"><i></i>GULSUM</div>
<div class="ti" style="top:384px"><i></i>home</div>
<div class="ti" style="top:412px"><i></i>homes</div>
<div class="ti" style="top:440px"><i></i>KGveIDB</div>
<div class="ti" style="top:468px"><i></i>KIZILIRMAKDELTA</div>
<div class="ti sel" style="top:496px"><i></i>ORTAK</div>
<div class="ti" style="top:524px"><i></i>OZLEM</div>
<div class="ti" style="top:552px"><i></i>RAMAZAN</div>
<div class="ti" style="top:580px"><i></i>SEVGI</div>
<div class="ti" style="top:608px"><i></i>SEVILAY</div>
<div class="ti" style="top:636px"><i></i>VOLKAN</div>
<div class="ti" style="top:664px"><i></i>YILMAZ</div>
</div>
<div class="a" style="left:408px;top:237px;width:1px;height:452px;background:#dfe2e5"></div>
<!-- list -->
<div class="a" style="left:425px;top:237px;width:690px;height:1px;background:#e3e6e9"></div>
<div class="a" style="left:425px;top:264px;width:690px;height:1px;background:#e3e6e9"></div>
<div class="a" style="left:425px;top:291px;width:678px;height:1px;background:#eceef0"></div>
<div class="a" style="left:425px;top:318px;width:678px;height:1px;background:#eceef0"></div>
<div class="a" style="left:647px;top:238px;width:1px;height:26px;background:#e3e6e9"></div>
<div class="a" style="left:757px;top:238px;width:1px;height:26px;background:#e3e6e9"></div>
<div class="a" style="left:894px;top:238px;width:1px;height:26px;background:#e3e6e9"></div>
<div class="a" style="left:1097px;top:238px;width:1px;height:26px;background:#e3e6e9"></div>
<div class="t hd" style="left:434px;top:244px">İsim</div>
<div class="t hd" style="left:641px;width:100px;text-align:right;top:244px">Boyut</div>
<div class="t hd" style="left:766px;top:244px">Dosya Türü</div>
<div class="t hd" style="left:886px;width:200px;text-align:right;top:244px;letter-spacing:0.25px">Değiştirme Tarihi</div>
<svg class="a" style="left:1104px;top:246px" width="3" height="12"><rect x="0" y="0" width="2" height="2" fill="#2a86d0"/><rect x="0" y="4" width="2" height="2" fill="#2a86d0"/><rect x="0" y="8" width="2" height="2" fill="#2a86d0"/></svg>
<svg class="a" style="left:434px;top:271px" width="16" height="14"><use href="#fold"/></svg>
<div class="t rw" style="left:454px;top:272px;font-size:12px">NURCAN</div>
<div class="t rw" style="left:766px;top:272px">Klasör</div>
<div class="t rw dt" style="left:901px;width:200px;text-align:right;top:272px">2017-06-02 13:26:18</div>
<svg class="a" style="left:434px;top:298px" width="16" height="14"><use href="#fold"/></svg>
<div class="t rw" style="left:454px;top:299px;font-size:12px">RAMAZAN</div>
<div class="t rw" style="left:766px;top:299px">Klasör</div>
<div class="t rw dt" style="left:901px;width:200px;text-align:right;top:299px">2017-06-02 13:48:34</div>
<!-- footer -->
<div class="a" style="left:425px;top:649px;width:690px;height:1px;background:#e3e6e9"></div>
<div class="a" style="left:425px;top:676px;width:690px;height:1px;background:#dfe2e5"></div>
<div class="t" style="left:1035px;top:656px;font-size:13px;color:#1a78cc">2 öğe</div>
<div class="a" style="left:1076px;top:654px;width:1px;height:18px;background:#e3e6e9"></div>
<svg class="a" style="left:1089px;top:656px" width="14" height="14"><path d="M11.6,9.1 A5,5 0 1 1 10.3,4.3" stroke="#1a78cc" stroke-width="1.9" fill="none"/><path d="M13.2,2.2 L13.2,7 L8.4,7Z" fill="#1a78cc"/></svg>
<!-- windows taskbar -->
<div class="a" style="left:0;top:984px;width:1280px;height:40px;background:linear-gradient(90deg,#2c78ae 0%,#3a8ec6 10%,#3890c8 40%,#2a78b8 65%,#1e5ea4 80%,#1a4c90 90%,#1a4a8c 100%);border-top:1px solid #1a3c78"></div>
<div class="a" style="left:0;top:985px;width:1280px;height:18px;background:linear-gradient(180deg,rgba(255,255,255,0.12),rgba(255,255,255,0.02))"></div>
<div class="a" style="left:0;top:985px;width:1280px;height:1px;background:rgba(190,220,255,0.35)"></div>
<svg class="a" style="left:980px;top:985px" width="100" height="39"><defs><filter id="sb"><feGaussianBlur stdDeviation="2.5"/></filter></defs><path d="M8,-4 L34,-4 Q58,16 78,43 L52,43 Q36,18 8,-4Z" fill="rgba(170,215,255,0.35)" filter="url(#sb)"/><path d="M20,-2 L30,-2 Q50,16 68,41 L60,41 Q42,16 20,-2Z" fill="rgba(220,240,255,0.5)" filter="url(#sb)"/></svg>
<svg class="a" style="left:8px;top:986px" width="38" height="38" viewBox="0 0 38 38">
<defs><linearGradient id="orb" x1="0" y1="0" x2="0" y2="1"><stop offset="0" stop-color="#d0dce8"/><stop offset="0.42" stop-color="#8aa4bc"/><stop offset="0.47" stop-color="#0a3a74"/><stop offset="0.75" stop-color="#1470b8"/><stop offset="1" stop-color="#28d0f8"/></linearGradient></defs>
<circle cx="19" cy="19" r="17.5" fill="url(#orb)" stroke="#0a2a58" stroke-width="1"/>
<circle cx="19" cy="19" r="18.5" fill="none" stroke="#80b8e0" stroke-width="0.8"/>
<path d="M10,10 Q15,7.5 20,9.5 L18.5,18 Q14,16 9,18Z" fill="#f06820"/>
<path d="M21,10 Q26,12 31,11 L29.5,20.5 Q25,21.5 20,19Z" fill="#8ccc40"/>
<path d="M9,19 Q14,17 19,19 L17.5,28 Q12.5,25.5 7.5,27.5Z" fill="#38a8ec"/>
<path d="M20,20 Q25,22.5 29.5,21.5 L28,30 Q23,31 18.5,29Z" fill="#fcc020"/>
</svg>
<svg class="a" style="left:73px;top:988px" width="34" height="32" viewBox="0 0 34 32">
<defs><linearGradient id="ieg" x1="0" y1="0" x2="0" y2="1"><stop offset="0" stop-color="#7ad8ff"/><stop offset="1" stop-color="#1a90d8"/></linearGradient></defs>
<path d="M17.5,5 C25,5 29,10 29,17 L29,18.5 L12,18.5 C12.5,23 15,25 18.5,25 C21.5,25 23.5,24 24.5,22 L28.5,22 C27,27 23,29.5 18,29.5 C10.5,29.5 6,24.5 6,17.5 C6,10 11,5 17.5,5Z M12.2,14 L23.5,14 C23,10.5 21,9 18,9 C15,9 12.8,10.5 12.2,14Z" fill="url(#ieg)"/>
<path d="M4,30 C0,26 5,16 13,9 C21,2 30,-1 32,3 C33,5 31,9 28,12" stroke="#f6c830" stroke-width="2.8" fill="none" stroke-linecap="round"/>
</svg>
<div class="a" style="left:122px;top:985px;width:58px;height:38px;border:1px solid rgba(220,240,255,0.7);border-radius:3px;background:linear-gradient(180deg,rgba(255,255,255,0.45),rgba(255,255,255,0.2));box-shadow:inset 0 0 0 1px rgba(0,40,80,0.3)"></div>
<svg class="a" style="left:135px;top:990px" width="32" height="30" viewBox="0 0 32 30">
<path d="M1,5 L12,5 L14,7 L30,7 L30,29 L1,29Z" fill="#e8c870"/>
<rect x="5" y="3" width="10" height="5" fill="#fff"/><rect x="6" y="3" width="3" height="2" fill="#2a9a2a"/>
<rect x="11" y="6" width="10" height="5" fill="#fff"/><rect x="12" y="6" width="3" height="2" fill="#c83020"/>
<rect x="17" y="9" width="12" height="5" fill="#fff"/><rect x="18" y="9" width="3" height="2" fill="#2a7ad0"/>
<path d="M1,12 L31,12 L31,29 L1,29Z" fill="#f8e4a0"/>
<path d="M8,29 L8,19 L24,19 L24,29 L21,29 L21,22 L11,22 L11,29Z" fill="#a8d8f0" stroke="#6aa8d0" stroke-width="0.8"/>
</svg>
<svg class="a" style="left:199px;top:993px" width="26" height="25" viewBox="0 0 26 25">
<rect x="4" y="1" width="20" height="23" fill="#c8e4f8" opacity="0.6"/><rect x="1" y="0" width="20" height="23" fill="#a8d4f4" opacity="0.7"/>
<circle cx="10" cy="11.5" r="9" fill="#f07a1a"/><circle cx="10" cy="11.5" r="7.5" fill="#f58a2a"/>
<path d="M7,6.5 L15,11.5 L7,16.5Z" fill="#fff"/>
</svg>
<div class="a" style="left:246px;top:985px;width:58px;height:38px;border:1px solid rgba(230,245,255,0.85);border-radius:3px;background:linear-gradient(180deg,rgba(255,255,255,0.6),rgba(255,255,255,0.3))"></div>
<svg class="a" style="left:260px;top:989px" width="30" height="30" viewBox="0 0 30 30">
<path d="M15,15 L2,15 A13,13 0 0 1 26.3,8.5Z" fill="#db4437"/>
<path d="M15,15 L26.3,8.5 A13,13 0 0 1 8.5,26.3Z" fill="#fcc934"/>
<path d="M15,15 L8.5,26.3 A13,13 0 0 1 2,15 Q2,10 3.7,8.5Z" fill="#1ea362"/>
<path d="M3.7,8.5 L10.5,19.5 L15,15Z" fill="#1ea362"/>
<path d="M26.3,8.5 L15,8.5 L15,15Z" fill="#db4437"/>
<circle cx="15" cy="15" r="6" fill="#fff"/><circle cx="15" cy="15" r="4.6" fill="#4a8af0"/>
</svg>
<svg class="a" style="left:320px;top:988px" width="32" height="30" viewBox="0 0 32 30">
<rect x="1" y="1" width="28" height="28" rx="2" fill="#f8d870" stroke="#e0a830" stroke-width="1"/>
<path d="M12,16 L28,22 L28,28 L4,28Z" fill="#fff4d0"/>
<ellipse cx="11" cy="12" rx="7" ry="8.5" fill="none" stroke="#e68018" stroke-width="4"/>
<circle cx="26" cy="14" r="5" fill="#fff8e0" stroke="#e8b040" stroke-width="1"/><path d="M26,11 L26,14 L28,15" stroke="#a06020" stroke-width="0.8" fill="none"/>
</svg>
<div class="t" style="left:1090px;top:997px;font-size:12px;color:#fff">TR</div>
<svg class="a" style="left:1119px;top:1000px" width="12" height="8"><path d="M1,6 L6,1.5 L11,6Z" fill="#fff"/></svg>
<svg class="a" style="left:1142px;top:996px" width="18" height="18"><rect x="1" y="1" width="4" height="6" fill="none" stroke="#fff" stroke-width="1.2"/><rect x="4" y="5" width="12" height="9" fill="#1a3a60" stroke="#fff" stroke-width="1.2"/><path d="M8,16H13M10.5,14V16" stroke="#fff" stroke-width="1.2"/></svg>
<svg class="a" style="left:1166px;top:996px" width="16" height="16"><path d="M1,5 L4,5 L8,1 L8,15 L4,11 L1,11Z" fill="#fff"/><path d="M10,5 Q12,8 10,11 M12,3 Q15.5,8 12,13" stroke="#fff" stroke-width="1.2" fill="none"/></svg>
<div class="t" style="left:1213px;top:991px;font-size:12px;color:#fff;letter-spacing:-0.5px">09:32</div>
<div class="t" style="left:1200px;top:1008px;font-size:12px;color:#fff;letter-spacing:-0.6px">05.06.2017</div>
<div class="a" style="left:1267px;top:985px;width:13px;height:39px;border-left:1px solid rgba(255,255,255,0.4);background:linear-gradient(90deg,rgba(255,255,255,0.12),rgba(255,255,255,0.05));box-shadow:inset 1px 0 0 rgba(0,0,0,0.3)"></div>
</body></html>
